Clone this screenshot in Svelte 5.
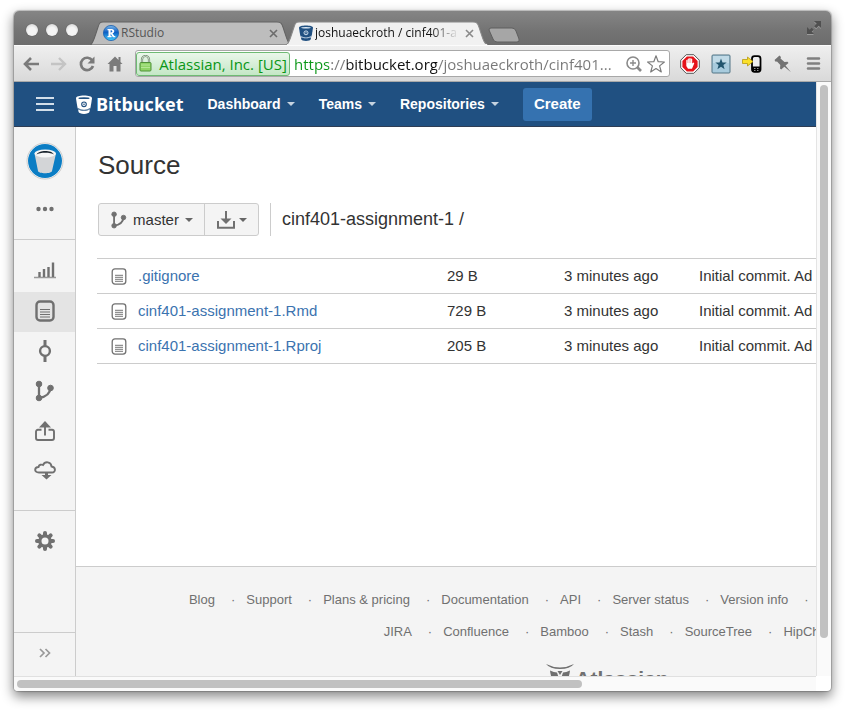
<script>
  const menus = ['Dashboard', 'Teams', 'Repositories'];
  const files = [
    { name: '.gitignore', size: '29 B' },
    { name: 'cinf401-assignment-1.Rmd', size: '729 B' },
    { name: 'cinf401-assignment-1.Rproj', size: '205 B' }
  ];
  const footerRows = [
    ['Blog', 'Support', 'Plans & pricing', 'Documentation', 'API', 'Server status', 'Version info', 'Terms of service', 'Privacy policy'],
    ['JIRA', 'Confluence', 'Bamboo', 'Stash', 'SourceTree', 'HipChat']
  ];
  const sections = ['Overview', 'Source', 'Commits', 'Branches', 'Pull requests', 'Downloads'];
  const url = 'https://bitbucket.org/joshuaeckroth/cinf401...';
</script>

{#snippet bucket(body, hole, width, height)}
  <svg {width} {height} viewBox="0 0 16 19" preserveAspectRatio="none" aria-hidden="true">
    <path fill={body} d="M8 .5C3.600.5 0 1.500 0 3.200c0 .5 1.200 7.800 1.600 10.100.2 1 2.900 2 6.400 2s6.200-1 6.400-2C14.800 11 16 3.700 16 3.200 16 1.500 12.400.5 8 .5z" />
    <ellipse cx="8" cy="3.200" rx="5.600" ry=".9" fill={hole} />
    <circle cx="8" cy="9.300" r="2.300" fill="none" stroke={hole} stroke-width="1.100" />
    <circle cx="8" cy="9.300" r=".8" fill={hole} />
    <path d="M1.600 13.300q6.400 4 12.800 0" stroke={hole} fill="none" stroke-width=".8" />
    <path fill={body} d="M2.100 14.400c3 1.800 8.800 1.800 11.800 0l-.5 2.600c-.3 1.100-2.500 1.900-5.400 1.900s-5.100-.8-5.400-1.900z" />
  </svg>
{/snippet}

{#snippet branch(size)}
  <svg width={size} height={size} viewBox="0 0 20 22" aria-hidden="true">
    <g fill="#707070" stroke="#707070">
      <circle cx="4" cy="4" r="2.800" /><circle cx="4" cy="18" r="2.800" /><circle cx="15.500" cy="8" r="2.800" />
      <path d="M4 4v14C11 17 15 14 15.500 8" fill="none" stroke-width="2.300" />
    </g>
  </svg>
{/snippet}

{#snippet doc(width, height, weight)}
  <svg {width} {height} viewBox="0 0 20 22" aria-hidden="true">
    <rect x="1.500" y="1.500" width="17" height="19" rx="3.500" fill="none" stroke="#707070" stroke-width={weight} />
    <path d="M5 9.500h10M5 12h10M5 14.500h10M5 17h10" stroke="#707070" stroke-width="1.200" />
  </svg>
{/snippet}

<div class="window">
  <div class="tabstrip">
    <div class="lights">
      <button aria-label="Close"></button><button aria-label="Minimize"></button><button aria-label="Zoom"></button>
    </div>
    <div class="tab back">
      <svg class="shape" viewBox="0 0 200 24" preserveAspectRatio="none" aria-hidden="true">
        <path d="M0 24C3 23 4 18 7 9 9 3 9 1 13 1H185C190 1 190 3 192 9 195 18 196 23 200 24z" fill="#bdbdbd" stroke="#626262" />
      </svg>
      <svg width="16" height="16" viewBox="0 0 16 16" aria-hidden="true">
        <defs><linearGradient id="rball" x1="0" y1="0" x2="0" y2="1"><stop offset="0" stop-color="#7db7e8" /><stop offset=".45" stop-color="#0d5fc4" /><stop offset="1" stop-color="#42cdfc" /></linearGradient></defs>
        <circle cx="8" cy="8" r="7.600" fill="url(#rball)" stroke="#1b5fae" stroke-width=".8" />
        <path d="M4.500 4h4.200c3.300 0 3.300 4 .8 4.300l1.800 2.700h1v1.200h-2.400L7.600 8.500v2.500h1v1.200H4.500V11h1V5.200h-1zM7.600 5.200v2.200c2.400.2 2.400-2.200 0-2.200z" fill="#fff" />
      </svg>
      <span class="title">RStudio</span>
      <button class="x" aria-label="Close tab"><svg width="9" height="9" viewBox="0 0 9 9"><path d="M1 1l7 7M8 1l-7 7" stroke="#6c6c6c" stroke-width="1.600" /></svg></button>
    </div>
    <div class="tab front">
      <svg class="shape" viewBox="0 0 200 24" preserveAspectRatio="none" aria-hidden="true">
        <path d="M0 24C3 23 4 18 7 9 9 3 9 1 13 1H185C190 1 190 3 192 9 195 18 196 23 200 24z" fill="#f1f1f1" stroke="#8a8a8a" />
        <path d="M1 24h198" stroke="#f1f1f1" stroke-width="2" />
      </svg>
      {@render bucket('#205081', '#d5e4f2', 14, 16)}
      <span class="title fade">joshuaeckroth / cinf401-a</span>
      <button class="x" aria-label="Close tab"><svg width="9" height="9" viewBox="0 0 9 9"><path d="M1 1l7 7M8 1l-7 7" stroke="#8a8a8a" stroke-width="1.600" /></svg></button>
    </div>
    <button class="newtab" aria-label="New tab">
      <svg width="32" height="16" viewBox="0 0 32 16"><path d="M3 1H24Q27 1 28 4L31 12Q32 15 29 15H9Q6 15 5 12L1 3Q1 1 3 1z" fill="#a6a6a6" stroke="#5f5f5f" /></svg>
    </button>
    <button class="full" aria-label="Full screen">
      <svg width="16" height="16" viewBox="0 0 16 16">
        <path d="M8 2h7v7l-2.300-2.300-2.500 2.500-2-2 2.500-2.500zM1 8v7h7l-2.300-2.300 2-2-2-2-2 2z" fill="#9c9c9c" />
        <path d="M8 1h7v7l-2.300-2.300-2.500 2.500-2-2 2.500-2.500zM1 7v7h7l-2.300-2.300 2-2-2-2-2 2z" fill="#505050" />
      </svg>
    </button>
  </div>

  <div class="toolbar">
    <div class="navs">
      <button aria-label="Back"><svg width="18" height="18" viewBox="0 0 18 18"><path d="M17 9H4M9 3L3 9l6 6" fill="none" stroke="#7b7b7b" stroke-width="2.600" /></svg></button>
      <button aria-label="Forward"><svg width="18" height="18" viewBox="0 0 18 18"><path d="M1 9h13M9 3l6 6-6 6" fill="none" stroke="#c4c4c4" stroke-width="2.400" /></svg></button>
      <button aria-label="Reload"><svg width="18" height="18" viewBox="0 0 18 18"><path d="M14.300 5.500A6.200 6.200 0 1 0 15 11" fill="none" stroke="#7b7b7b" stroke-width="2.700" /><path d="M16.500 1.500v7H9.500z" fill="#7b7b7b" /></svg></button>
      <button aria-label="Home"><svg width="18" height="18" viewBox="0 0 18 18"><path d="M9 1.500L1.500 9h2v7.500h4V11h3v5.500h4V9h2L14.500 7V2h-2v3z" fill="#7b7b7b" /></svg></button>
    </div>
    <div class="omnibox">
      <button class="chip">
        <svg width="13" height="17" viewBox="0 0 13 17" aria-hidden="true">
          <path d="M3 8V4.500a3.500 3.500 0 0 1 7 0V8" fill="none" stroke="#6f8a6c" stroke-width="2.200" /><path d="M3 8V4.500a3.500 3.500 0 0 1 7 0V8" fill="none" stroke="#e3e9e2" stroke-width=".8" />
          <rect x="1" y="7.500" width="11" height="8.500" rx="1" fill="#8fd466" stroke="#4f9139" /><path d="M2 10h9M2 12.500h9" stroke="#b4e795" />
        </svg>
        <span>Atlassian, Inc. [US]</span>
      </button>
      <input type="text" aria-label="Address" value={url} />
      <button aria-label="Zoom"><svg width="18" height="18" viewBox="0 0 18 18"><circle cx="8" cy="8" r="6" fill="none" stroke="#8a8a8a" stroke-width="1.600" /><path d="M5 8h6M8 5v6" stroke="#8a8a8a" stroke-width="1.400" /><path d="M12 12l4 4" stroke="#8a8a8a" stroke-width="2.600" /></svg></button>
      <button aria-label="Bookmark"><svg width="20" height="20" viewBox="0 0 20 20"><path d="M10 1.800l2.200 5.900 6.200.3-4.800 3.900 1.700 6.100L10 14.600 4.700 18l1.700-6.100L1.600 8l6.200-.3z" fill="#fff" stroke="#7d7d7d" stroke-width="1.200" stroke-linejoin="round" /></svg></button>
    </div>
    <div class="exts">
      <button aria-label="AdBlock"><svg width="20" height="20" viewBox="0 0 20 20"><path d="M6.200.7h7.600l5.500 5.500v7.600l-5.500 5.500H6.200L.7 13.800V6.200z" fill="#fff" stroke="#555" /><path d="M6.900 2.400h6.200l4.500 4.500v6.200l-4.500 4.500H6.900l-4.500-4.500V6.900z" fill="#e5141b" /><path d="M6.300 10V6.200q.7-.9 1.400 0V5q.8-.9 1.500 0V4.400q.8-.9 1.500 0V5q.8-.9 1.500 0v4.500l1.300-1q1.100.3.600 1.300L12 14.800H8L6.300 12z" fill="#fff" /><path d="M7.700 6v3M9.200 5v4M10.700 5v4" stroke="#e5141b" stroke-width=".3" /></svg></button>
      <button aria-label="Favorites"><svg width="20" height="20" viewBox="0 0 20 20"><rect x="1" y="1" width="18" height="18" rx="1" fill="#a8cbdd" stroke="#527585" /><path d="M2 2h16v7H2z" fill="#c0dae7" /><path d="M10 4.500l1.500 4h4.200l-3.300 2.600 1.200 4.200-3.600-2.500-3.600 2.500 1.200-4.200-3.300-2.600h4.200z" fill="#23566f" /></svg></button>
      <button aria-label="Send to phone"><svg width="20" height="20" viewBox="0 0 20 20"><rect x="10" y="2.200" width="8.500" height="15.600" rx="2.500" fill="#eee" stroke="#000" stroke-width="1.800" /><path d="M10 12.500h8.500v4l-1.500 1.500h-6L10 16.500z" /><path d="M12 14.500h1.500M15 14.500h1.500M12 16.500h1.500M15 16.500h1.500" stroke="#ccc" stroke-width=".7" /><path d="M.5 5.500h5V3l5.500 4.500L5.500 12V9.500h-5z" fill="#fbe02a" stroke="#b89a10" stroke-width=".8" /></svg></button>
      <button aria-label="Pin"><svg width="20" height="20" viewBox="0 0 20 20"><path d="M1.500 6L6.500 1.500 8 3l-.5 1.500L11.500 8l3-.2 1 1.200-3 2.600 5.500 6.700-6.700-5.500L8.200 15.500 7 14.500 7.300 11 4 7.500 2.600 7.800z" fill="#737373" /></svg></button>
      <button aria-label="Menu"><svg width="20" height="20" viewBox="0 0 20 20"><path d="M4 4.500h11M4 9.500h11M4 14.500h11" stroke="#808080" stroke-width="2.600" stroke-linecap="round" /></svg></button>
    </div>
  </div>

  <div class="frame">
    <div class="view">
      <header>
        <button class="burger" aria-label="Menu"><svg width="18" height="14" viewBox="0 0 18 14"><path d="M0 1h18M0 7h18M0 13h18" stroke="#d3dfea" stroke-width="2" /></svg></button>
        <a class="brand" href="#home">{@render bucket('#fff', '#205081', 16, 19)}<span>Bitbucket</span></a>
        <nav class="menus">
          {#each menus as menu}
            <button>{menu}<i class="caret"></i></button>
          {/each}
        </nav>
        <button class="create">Create</button>
      </header>

      <div class="body">
        <aside>
          <div class="repo">
            <a href="#repo" aria-label="Repository">
              <svg width="38" height="38" viewBox="0 0 38 38">
                <circle cx="19" cy="19" r="18" fill="#fff" stroke="#c9c9c9" /><circle cx="19" cy="19" r="17" fill="#0b7dc4" />
                <path d="M8.500 11.500L12 29c.5 3 13.500 3 14 0l4-17.500z" fill="#d3d5d7" />
                <ellipse cx="19.200" cy="11.500" rx="10.800" ry="4" fill="#f5f6f6" />
                <path d="M10.500 12.500c2-4.500 15-4.800 17.500 0-3-2.200-14.500-2.200-17.500 0z" fill="#17222b" />
              </svg>
            </a>
            <button aria-label="More"><svg width="18" height="6" viewBox="0 0 18 6"><g fill="#707070"><circle cx="2.500" cy="3" r="2.200" /><circle cx="9" cy="3" r="2.200" /><circle cx="15.500" cy="3" r="2.200" /></g></svg></button>
          </div>
          <nav class="sections">
            {#each sections as section, i}
              <a href="#{section}" aria-label={section} class:active={i === 1}>
                {#if i === 0}
                  <svg width="22" height="18" viewBox="0 0 22 18"><path d="M0 15.500h22" stroke="#999" stroke-width="1.500" /><path d="M5.500 15v-5M10 15V7M14.500 15V5M19 15V.5" stroke="#707070" stroke-width="2.400" /></svg>
                {:else if i === 1}
                  {@render doc(20, 22, 2.4)}
                {:else if i === 2}
                  <svg width="14" height="22" viewBox="0 0 14 22"><circle cx="7" cy="11" r="4.900" fill="none" stroke="#707070" stroke-width="2.400" /><path d="M7 0v6M7 16v6" stroke="#707070" stroke-width="3" /></svg>
                {:else if i === 3}
                  {@render branch(22)}
                {:else if i === 4}
                  <svg width="20" height="20" viewBox="0 0 20 20"><path d="M6.500 8.800H3q-2 0-2 2V17q0 2 2 2h14q2 0 2-2v-6.200q0-2-2-2h-3.500M10 14.500V4" fill="none" stroke="#707070" stroke-width="1.900" /><path d="M10 0l6 6.500H4z" fill="#707070" /></svg>
                {:else}
                  <svg width="22" height="19" viewBox="0 0 22 19"><path d="M5 11.500C-.5 11.500.5 6 4.500 6c.5-2.500 3-2.800 4.500-2 2-4 8-3.500 8.500 1.500 4.500.5 4.500 6 .5 6z" fill="none" stroke="#707070" stroke-width="1.900" /><path d="M11 11h3v3h3.500L12.500 18.500 7.500 14H11z" fill="#707070" /></svg>
                {/if}
              </a>
            {/each}
          </nav>
          <a class="settings" href="#settings" aria-label="Settings">
            <svg width="20" height="20" viewBox="-10 -10 20 20">
              {#each [0, 45, 90, 135] as angle}
                <path d="M0-8v16" transform="rotate({angle})" stroke="#707070" stroke-width="4" stroke-linecap="round" />
              {/each}
              <circle r="6.800" fill="#707070" /><circle r="3.500" fill="#f4f4f4" />
            </svg>
          </a>
          <button class="expand" aria-label="Expand sidebar"><svg width="12" height="10" viewBox="0 0 12 10"><path d="M1 1l4 4-4 4M6.500 1l4 4-4 4" fill="none" stroke="#999" stroke-width="1.700" /></svg></button>
        </aside>

        <div class="page">
          <main>
            <h1>Source</h1>
            <div class="controls">
              <div class="group">
                <button class="ref">{@render branch(18)}<span>master</span><i class="caret"></i></button>
                <button class="dl" aria-label="Download"><svg width="18" height="18" viewBox="0 0 18 18"><path d="M1 10v6.800h16V10" fill="none" stroke="#707070" stroke-width="2" /><path d="M9 0v9" stroke="#707070" stroke-width="2" /><path d="M3.500 7.500h11L9 13z" fill="#707070" /></svg><i class="caret"></i></button>
              </div>
              <div class="crumb">cinf401-assignment-1 /</div>
            </div>
            <table>
              <tbody>
                {#each files as file}
                  <tr>
                    <td class="name"><div>{@render doc(16, 19, 1.6)}<a href="#{file.name}">{file.name}</a></div></td>
                    <td class="size">{file.size}</td>
                    <td class="when">3 minutes ago</td>
                    <td>Initial commit. Ad</td>
                  </tr>
                {/each}
              </tbody>
            </table>
          </main>
          <footer>
            {#each footerRows as row}
              <ul>
                {#each row as item}
                  <li><a href="#{item}">{item}</a></li>
                {/each}
              </ul>
            {/each}
            <a class="atlassian" href="#atlassian">
              <svg width="30" height="26" viewBox="0 0 30 26" aria-hidden="true"><path d="M1 0q14 7 28 0-4 5-14 5T1 0zM5 6.500q4 2 7 2l2 6q1 4-1 7Q6 17 5 6.500zM25 6.500q-4 2-7 2l-2 6q-1 4 1 7 7-4.500 8-15zM12.500 7h5L15 11z" fill="#707070" /></svg>
              <span>Atlassian</span>
            </a>
          </footer>
        </div>
      </div>
    </div>
    <div class="vbar"><div></div></div>
    <div class="hbar"><div></div></div>
  </div>
</div>

<style>
  :global(body) { margin: 0; background: #fff; }
  .window, .window :global(*) { box-sizing: border-box; }
  .window {
    display: flex;
    flex-direction: column;
    height: calc(100vh - 31px);
    margin: 11px 14px 20px;
    overflow: hidden;
    border-radius: 5px 5px 4px 4px;
    background: #fff;
    box-shadow: 0 0 1px 1px rgba(0, 0, 0, .2), 0 5px 12px 1px rgba(0, 0, 0, .45);
    font: 15px/20px "Liberation Sans", Arial, sans-serif;
    color: #333;
  }
  button { border: 0; padding: 0; background: none; font: inherit; color: inherit; display: flex; align-items: center; justify-content: center; }
  a { text-decoration: none; color: inherit; }
  svg { display: block; flex: none; }

  .tabstrip { display: flex; align-items: flex-end; flex: none; height: 34px; background: linear-gradient(#858585, #737373 60%, #6c6c6c); }
  .lights { display: flex; gap: 8px; align-self: center; margin: 4px 12px 0 12px; }
  .lights button { width: 12px; height: 12px; border-radius: 50%; background: radial-gradient(circle at 50% 60%, #f4f4f4 40%, #c8c8c8); box-shadow: 0 0 1px #444; }
  .tab { position: relative; display: flex; align-items: center; flex: none; width: 202px; height: 24px; padding: 0 14px 0 13px; font: 12px/20px "Open Sans", "Noto Sans", sans-serif; color: #555; }
  .tab > * { position: relative; }
  .tab .shape { position: absolute; left: 0; top: 0; width: 100%; height: 24px; }
  .tab.front { margin-left: -6px; color: #111; z-index: 1; }
  .title { flex: 1; min-width: 0; margin: 0 6px 0 2px; overflow: hidden; white-space: nowrap; }
  .fade { mask-image: linear-gradient(90deg, #000 80%, transparent); }
  .x { width: 9px; height: 20px; }
  .newtab { align-self: center; margin: 13px 0 0; height: 16px; }
  .full { align-self: center; margin: 0 9px 0 auto; }

  .toolbar { display: flex; align-items: center; flex: none; height: 37px; padding: 0 7px 0 8px; border-top: 1px solid #fbfbfb; border-bottom: 1px solid #a9a9a9; background: linear-gradient(#efefef, #d9d9d9); }
  .navs { display: flex; gap: 10px; margin-right: 11px; }
  .omnibox { display: flex; align-items: center; flex: 1; min-width: 0; height: 27px; margin-right: 10px; padding-right: 3px; border: 1px solid #a8a8a8; border-radius: 3px; background: #fff; font: 15px/22px "Open Sans", "Noto Sans", sans-serif; }
  .chip { flex: none; gap: 7px; width: 154px; height: 24px; border: 1px solid #6fba74; border-radius: 3px; background: linear-gradient(#eaf7ea, #c4e7c6); color: #0a9617; white-space: nowrap; }
  .omnibox input {
    flex: 1; min-width: 0; height: 22px; padding: 0 0 0 4px; border: 0; outline: 0; font: inherit; color: transparent;
    background: linear-gradient(90deg, #0a9617 39px, #777 39px 57px, #111 57px 147px, #777 147px);
    background-clip: text; -webkit-background-clip: text;
  }
  .omnibox button + button { margin-left: 3px; }
  .exts { display: flex; gap: 11px; }

  .frame { display: grid; grid-template: minmax(0, 1fr) 15px / minmax(0, 1fr) 15px; flex: 1; min-height: 0; }
  .view { display: flex; flex-direction: column; overflow: hidden; }
  .vbar { border-left: 1px solid #e4e4e4; padding: 3px; background: #fafafa; }
  .vbar div { width: 8px; height: 94%; border-radius: 4px; background: #c1c1c1; }
  .hbar { border-top: 1px solid #e0e0e0; padding: 3px; background: #fafafa; }
  .hbar div { width: 71%; height: 8px; border-radius: 4px; background: #c1c1c1; }

  header { display: flex; align-items: center; flex: none; height: 45px; padding-left: 22px; border-bottom: 1px solid #2e3d54; background: #205081; color: #fff; }
  .brand { display: flex; align-items: center; gap: 4px; margin: 0 24px 0 22px; font: bold 18px/24px "Open Sans", "Noto Sans", sans-serif; }
  .menus { display: flex; gap: 24px; font-size: 14px; font-weight: bold; }
  .caret { width: 0; height: 0; margin-left: 6px; border: 4px solid transparent; border-top-color: currentColor; border-bottom: 0; }
  .menus .caret { border-top-color: #c6d3e0; }
  .create { width: 69px; height: 33px; margin-left: 24px; border-radius: 3px; background: #3572b0; font-weight: bold; }

  .body { display: flex; flex: 1; min-height: 0; }
  aside { display: flex; flex-direction: column; flex: none; width: 62px; border-right: 1px solid #ccc; background: #f4f4f4; }
  .repo { display: flex; flex-direction: column; align-items: center; gap: 19px; height: 113px; padding-top: 15px; border-bottom: 1px solid #ccc; }
  .repo button { height: 20px; }
  .sections { padding: 12px 0 18px; border-bottom: 1px solid #ccc; }
  .sections a, .settings { display: flex; align-items: center; justify-content: center; height: 40px; }
  .sections a { padding-bottom: 3px; }
  .sections .active { background: #e4e4e4; }
  .settings { margin-top: 10px; }
  .expand { height: 44px; margin-top: auto; padding-bottom: 3px; border-top: 1px solid #ccc; }

  .page { display: flex; flex-direction: column; flex: 1 0 1062px; }
  main { flex: none; min-height: 439px; padding: 22px 21px; }
  h1 { margin: 0; padding-left: 1px; font-size: 26px; line-height: 32px; font-weight: normal; }
  .controls { display: flex; margin: 22px 0; padding-left: 1px; }
  .group { display: flex; border: 1px solid #ccc; border-radius: 3px; background: #f4f4f4; }
  .group button { height: 31px; }
  .group .caret { border-top-color: #666; }
  .ref { width: 106px; padding: 0 11px; border-right: 1px solid #ccc; }
  .ref span { margin-left: 5px; }
  .dl { width: 53px; }
  .dl .caret { margin-left: 4px; }
  .crumb { margin-left: 11px; padding-left: 11px; border-left: 1px solid #ccc; font-size: 18px; line-height: 33px; }
  table { width: 100%; border-collapse: collapse; border-top: 1px solid #ccc; table-layout: fixed; }
  td { height: 35px; padding: 0; border-bottom: 1px solid #ccc; }
  .name { width: 350px; padding-left: 14px; }
  .name div { display: flex; align-items: center; gap: 11px; }
  .name a { color: #3b73af; }
  .size { width: 117px; }
  .when { width: 135px; }

  footer { flex: 1 0 110px; padding-top: 17px; border-top: 1px solid #ccc; background: #f4f4f4; color: #707070; font-size: 13px; line-height: 32px; text-align: center; }
  ul { display: flex; justify-content: center; margin: 0; padding: 0; list-style: none; white-space: nowrap; }
  li:not(:last-child)::after { content: "·"; margin: 0 11px 0 16px; }
  .atlassian { display: flex; justify-content: center; margin-top: 16px; font-size: 21px; font-weight: bold; line-height: 30px; }
</style>
